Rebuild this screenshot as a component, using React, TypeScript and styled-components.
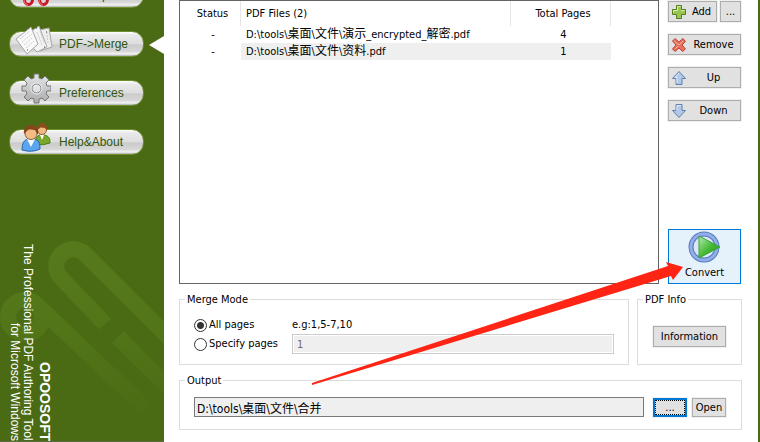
import React from 'react';
import styled, { createGlobalStyle, css } from 'styled-components';

const ui = '"DejaVu Sans Condensed", "Noto Sans CJK SC", sans-serif';

const GlobalStyle = createGlobalStyle`
  * { box-sizing: border-box; }
  html, body, #root { height: 100%; }
  body { margin: 0; background: #4b6a14; font: 11px/16px ${ui}; color: #000; }
  button, input { font: inherit; color: inherit; }
`;

const Window = styled.div`
  display: flex;
  min-height: 100%;
  padding-right: 2px;
  background: #4b6a14;
`;

const Sidebar = styled.aside`
  position: relative;
  flex: 0 0 164px;
  display: flex;
  flex-direction: column;
  justify-content: space-between;
  height: 100vh;
  overflow: hidden;
  border-bottom: 1px solid #5c6b48;
  font-family: "Liberation Sans", Arial, sans-serif;
`;

const Watermark = styled.svg`
  position: absolute;
  left: 0;
  bottom: 0;
`;

const Nav = styled.nav`
  position: relative;
  display: flex;
  flex-direction: column;
  gap: 23px;
  margin-top: -18px;
  padding-left: 9px;
`;

const NavButton = styled.button<{ $active?: boolean }>`
  position: relative;
  width: 135px;
  height: 26px;
  padding: 0 0 0 49px;
  border: 1px solid #6d8f2c;
  border-radius: 12px;
  background: linear-gradient(#fff 0, #e9e9e9 12%, #dedede 48%, #cbcbcb 54%, #d6d6d6 80%, #f4f4f4 92%, #aaa 100%);
  color: #2f570c;
  font-size: 12px;
  line-height: 24px;
  text-align: left;
  ${p => p.$active && css`
    &::after {
      content: "";
      position: absolute;
      top: 4px;
      right: -21px;
      border: solid transparent;
      border-width: 9px 15px 9px 0;
      border-right-color: #fff;
    }
  `}
`;

const NavIcon = styled.svg`
  position: absolute;
  left: 5px;
  top: -9px;
`;

const Brand = styled.div`
  position: relative;
  align-self: flex-start;
  margin-left: 8px;
  writing-mode: vertical-rl;
  text-align: right;
  color: #fff;
  font-size: 12px;
  line-height: 13px;
`;

const BrandName = styled.strong`
  display: block;
  font-size: 14px;
  line-height: 22px;
`;

const BrandLine = styled.span`
  display: block;
`;

const Main = styled.main`
  position: relative;
  flex: 1;
  min-width: 0;
  display: flex;
  flex-direction: column;
  padding: 0 16px 11px 15px;
  background: #fff;
`;

const Workspace = styled.section`
  display: flex;
  gap: 9px;
  padding-right: 1px;
`;

const FileList = styled.div`
  flex: 1;
  min-height: 284px;
  border: 1px solid #646464;
`;

const FileTable = styled.table`
  width: 431px;
  table-layout: fixed;
  border-collapse: separate;
  border-spacing: 0;
`;

const HeadCell = styled.th<{ $align?: string; $width: number }>`
  width: ${p => p.$width}px;
  height: 25px;
  padding: 1px 0 0 5px;
  border-right: 1px solid #e5e5e5;
  font-weight: normal;
  text-align: ${p => p.$align || 'left'};
`;

const Cell = styled.td<{ $align?: string; $selected?: boolean }>`
  height: 17px;
  padding: 1px 0 0 5px;
  overflow: hidden;
  line-height: 16px;
  white-space: nowrap;
  text-align: ${p => p.$align || 'left'};
  background: ${p => (p.$selected ? '#efefef' : 'transparent')};
`;

const Han = styled.span`
  font-size: 12px;
  line-height: 12px;
`;

const Actions = styled.div`
  flex: 0 0 73px;
  display: flex;
  flex-direction: column;
  gap: 12px;
  padding-top: 1px;
`;

const ActionRow = styled.div`
  display: flex;
  gap: 3px;
`;

const Button = styled.button<{ $width?: number; $small?: boolean; $focused?: boolean }>`
  display: flex;
  align-items: center;
  justify-content: center;
  width: ${p => (p.$width ? p.$width + 'px' : '100%')};
  height: ${p => (p.$small ? 19 : 21)}px;
  padding: 0;
  border: 1px solid #adadad;
  background: #e1e1e1;
  box-shadow: 0 0 0 1px #f0f0f0;
  line-height: 19px;
  ${p => p.$focused && css`
    border: 2px solid #0078d7;
    outline: 1px dotted #000;
    outline-offset: -3px;
  `}
`;

const IconButton = styled(Button)`
  justify-content: flex-start;
  padding-left: 2px;
`;

const ButtonText = styled.span`
  flex: 1;
  text-align: center;
`;

const ConvertButton = styled.button`
  display: flex;
  flex-direction: column;
  align-items: center;
  justify-content: space-between;
  height: 55px;
  margin-top: auto;
  padding: 1px 0 2px;
  border: 1px solid #0078d7;
  background: #e5f1fb;
`;

const Groups = styled.div`
  display: flex;
  gap: 8px;
  margin-top: 6px;
`;

const Group = styled.fieldset<{ $width?: number; $height: number }>`
  flex: ${p => (p.$width ? '0 0 ' + p.$width + 'px' : '1')};
  min-width: 0;
  min-height: ${p => p.$height}px;
  margin: 0;
  padding: 0 14px;
  border: 1px solid #dcdcdc;
`;

const Legend = styled.legend`
  margin-left: -9px;
  padding: 2px 2px 0;
`;

const ModeGrid = styled.div`
  display: grid;
  grid-template-columns: 98px 1fr;
  align-items: center;
  padding-top: 8px;
`;

const RadioLabel = styled.label`
  display: flex;
  align-items: center;
  gap: 2px;
  line-height: 18px;
  white-space: nowrap;
`;

const Radio = styled.input`
  appearance: none;
  width: 13px;
  height: 13px;
  margin: 0;
  border: 1px solid #333;
  border-radius: 50%;
  background: #fff;
  &:checked { background: radial-gradient(circle, #333 0 3px, #fff 4px); }
`;

const PagesInput = styled.input`
  min-width: 0;
  height: 20px;
  padding: 0 4px;
  border: 1px solid #ccc;
  background: #efefef;
  color: #6d6d6d;
  box-shadow: inset 0 0 0 1px #fff;
`;

const InfoBody = styled.div`
  padding: 18px 1px 0;
`;

const OutputRow = styled.div`
  display: flex;
  align-items: center;
  gap: 5px;
  padding: 8px 1px 0 0;
`;

const PathInput = styled.input`
  flex: 1;
  min-width: 0;
  height: 20px;
  margin-right: 4px;
  padding: 0 2px;
  border: 1px solid #7a7a7a;
  background: #efefef;
  font-size: 12px;
`;

const Output = styled.section`
  display: flex;
  margin-top: 6px;
`;

const Pointer = styled.svg`
  position: absolute;
  left: 0;
  top: 0;
  pointer-events: none;
`;

const ScissorsIcon = () => (
  <NavIcon width="36" height="36" viewBox="0 0 36 36" fill="none">
    <path d="M15 21 25 2M26 21 15 2" stroke="#b9bec4" strokeWidth="3" />
    <ellipse cx="13.500" cy="25.500" rx="4" ry="5" stroke="#c91825" strokeWidth="3" />
    <ellipse cx="28.500" cy="25.500" rx="4" ry="5" stroke="#c91825" strokeWidth="3" />
    <path d="M9 26q0 4 4 5M24 26q0 4 4 5" stroke="#f7686e" />
  </NavIcon>
);

const PagesIcon = () => (
  <NavIcon width="38" height="33" viewBox="0 -1 38 33" stroke="#a5a5a5">
    <path d="M24 6 34 4l3 19-12 4-5-9Z" fill="#eee" />
    <path d="m15 8 9-6 8 21-10 5-8-8Z" fill="#f4f4f4" />
    <path d="m1 15 15-12 7 17-11 10Z" fill="#fafafa" />
    <path d="m5 15 10-8m-8 11 10-8m-8 11 9-8m-7 11 8-7M22 8l5 13M25 7l4 12M32 8l1 12" stroke="#ccc" strokeDasharray="2 1" />
    <path d="M12 26h1M29 23h1M21 4h1M31 8h1" stroke="#454520" />
  </NavIcon>
);

const GearIcon = () => (
  <NavIcon width="36" height="32" viewBox="0 0 36 32">
    <defs>
      <linearGradient id="gear" x2="0" y2="1"><stop stopColor="#e4e6e8" /><stop offset="1" stopColor="#a9abad" /></linearGradient>
    </defs>
    <path
      fillRule="evenodd"
      fill="url(#gear)"
      stroke="#777"
      d="M19 2h5v4l3 1 3-3 4 4-3 3 1 3h4v5h-4l-1 3 3 3-4 4-3-3-3 1v4h-5v-4l-3-1-3 3-4-4 3-3-1-3H7v-5h4l1-3-3-3 4-4 3 3 3-1ZM21.500 12a4.500 4.500 0 1 0 .1 0Z"
    />
    <circle cx="21.500" cy="16.500" r="5.500" fill="none" stroke="#eee" />
  </NavIcon>
);

const PeopleIcon = () => (
  <NavIcon width="36" height="32" viewBox="0 0 36 32">
    <path d="M20 23c0-6 2-8 5-9h4c5 1 6 3 6 8q-7 3-15 1Z" fill="#79a82c" stroke="#4f7d13" />
    <path d="m25 14 2 5 2-5" fill="#fff" />
    <circle cx="27" cy="9" r="4.500" fill="#efb982" stroke="#986035" />
    <path d="M22 9c-1-9 12-9 10 1l-2-3c-2 0-4-1-5 0Z" fill="#8b4d1d" />
    <path d="M7 29c0-7 2-10 6-11h6c5 1 6 4 6 10q-8 4-18 1Z" fill="#5ba5ee" stroke="#2165ad" />
    <path d="m12 18 4 8 4-8" fill="#f5fbff" />
    <circle cx="16" cy="12.500" r="6" fill="#f2bd85" stroke="#955d31" />
    <path d="M9 13c-2-12 17-12 14 1l-3-5c-2 0-5-1-7 0Z" fill="#83471b" />
  </NavIcon>
);

const AddIcon = () => (
  <svg width="16" height="16" viewBox="0 0 16 16"><path d="M5.500 1.500h5v4h4v5h-4v4h-5v-4h-4v-5h4Z" fill="#9ac451" stroke="#557f20" /><path d="M6.500 6.500v-4h3M2.500 8.500v-2h4M10 6.500h3.500" fill="none" stroke="#d7edb2" /></svg>
);
const RemoveIcon = () => (
  <svg width="16" height="16" viewBox="0 0 16 16"><path d="m4 1.500 4 3.500 4-3.500 2.500 3L11 8l3.500 4-3 2.500L8 11l-4 3.500L1.500 12 5 8 1.500 4Z" fill="#e9705d" stroke="#bc4539" /><path d="m3 4 5 4 4-4M4 12l3-3" fill="none" stroke="#f7ac9d" /></svg>
);
const ArrowIcon = ({ down }: { down?: boolean }) => (
  <svg width="16" height="16" viewBox="0 0 16 16"><path d={down ? 'M5 1.500h6v6h3.500L8 14.500 1.500 7.500H5Z' : 'M5 14.500h6v-6h3.500L8 1.500 1.500 8.500H5Z'} fill="#b1c8e9" stroke="#5f7fae" /><path d={down ? 'M6 7.500v-5h4' : 'M6 13V7.500H4L8 3'} fill="none" stroke="#e3edf9" /></svg>
);
const ConvertIcon = () => (
  <svg width="33" height="32" viewBox="0 0 33 32">
    <defs><linearGradient id="play" x2="1" y2="1"><stop stopColor="#b5edb0" /><stop offset=".5" stopColor="#47ba38" /><stop offset="1" stopColor="#209b18" /></linearGradient></defs>
    <circle cx="16" cy="16" r="13" fill="#dce8fa" stroke="#5579c4" strokeWidth="5" />
    <circle cx="16" cy="16" r="13" fill="none" stroke="#91aee6" strokeWidth="3" />
    <path d="M11 5v22l21-11Z" fill="url(#play)" stroke="#38a431" />
  </svg>
);

export default function App() {
  return (
    <>
      <GlobalStyle />
      <Window>
        <Sidebar>
          <Watermark width="164" height="240" viewBox="0 202 164 240" fill="none" strokeWidth="16">
            <defs><linearGradient id="clip" gradientUnits="userSpaceOnUse" x1="0" y1="240" x2="0" y2="425"><stop stopColor="#567a1b" /><stop offset=".5" stopColor="#527518" /><stop offset="1" stopColor="#4b6a14" /></linearGradient></defs>
            <g stroke="url(#clip)">
              <path d="M105 325 62 280A17 17 0 1 1 86 256L170 340" />
              <path d="m118 338 52 52" />
              <circle cx="25" cy="318" r="17" />
              <path d="M37 306 146 410" />
            </g>
          </Watermark>
          <Nav>
            <NavButton><ScissorsIcon />PDF-&gt;Split</NavButton>
            <NavButton $active><PagesIcon />PDF-&gt;Merge</NavButton>
            <NavButton><GearIcon />Preferences</NavButton>
            <NavButton><PeopleIcon />Help&amp;About</NavButton>
          </Nav>
          <Brand>
            <BrandName>OPOOSOFT</BrandName>
            <BrandLine>The Professional PDF Authoring Tool</BrandLine>
            <BrandLine>for Microsoft Windows</BrandLine>
          </Brand>
        </Sidebar>
        <Main>
          <Workspace>
            <FileList>
              <FileTable>
                <thead>
                  <tr>
                    <HeadCell $width={61} $align="center">Status</HeadCell>
                    <HeadCell $width={270}>PDF Files (2)</HeadCell>
                    <HeadCell $width={100} $align="center">Total Pages</HeadCell>
                  </tr>
                </thead>
                <tbody>
                  <tr>
                    <Cell $align="center">-</Cell>
                    <Cell>D:\tools\<Han>桌面</Han>\<Han>文件</Han>\<Han>演示</Han>_encrypted_<Han>解密</Han>.pdf</Cell>
                    <Cell $align="center">4</Cell>
                  </tr>
                  <tr>
                    <Cell $align="center">-</Cell>
                    <Cell $selected>D:\tools\<Han>桌面</Han>\<Han>文件</Han>\<Han>资料</Han>.pdf</Cell>
                    <Cell $selected $align="center">1</Cell>
                  </tr>
                </tbody>
              </FileTable>
            </FileList>
            <Actions>
              <ActionRow>
                <IconButton $width={49}><AddIcon /><ButtonText>Add</ButtonText></IconButton>
                <Button $width={21}>...</Button>
              </ActionRow>
              <IconButton><RemoveIcon /><ButtonText>Remove</ButtonText></IconButton>
              <IconButton><ArrowIcon /><ButtonText>Up</ButtonText></IconButton>
              <IconButton><ArrowIcon down /><ButtonText>Down</ButtonText></IconButton>
              <ConvertButton><ConvertIcon />Convert</ConvertButton>
            </Actions>
          </Workspace>
          <Groups>
            <Group $height={75}>
              <Legend>Merge Mode</Legend>
              <ModeGrid>
                <RadioLabel><Radio type="radio" name="mode" defaultChecked />All pages</RadioLabel>
                <label htmlFor="pages">e.g:1,5-7,10</label>
                <RadioLabel><Radio type="radio" name="mode" />Specify pages</RadioLabel>
                <PagesInput id="pages" defaultValue="1" disabled />
              </ModeGrid>
            </Group>
            <Group $width={105} $height={75}>
              <Legend>PDF Info</Legend>
              <InfoBody><Button>Information</Button></InfoBody>
            </Group>
          </Groups>
          <Output>
            <Group $height={59}>
              <Legend>Output</Legend>
              <OutputRow>
                <PathInput aria-label="Output folder" readOnly defaultValue="D:\tools\桌面\文件\合并" />
                <Button $width={34} $small $focused>...</Button>
                <Button $width={34} $small>Open</Button>
              </OutputRow>
            </Group>
          </Output>
          <Pointer width="594" height="442" viewBox="164 0 594 442">
            <path d="M312 383 668 266 666 262 683 267 673 280 671 276 312 385Z" fill="#ff2414" />
          </Pointer>
        </Main>
      </Window>
    </>
  );
}
